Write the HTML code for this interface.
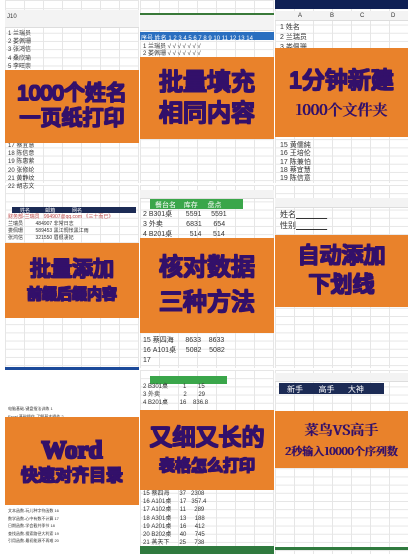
<!DOCTYPE html><html><head><meta charset="utf-8"><style>
*{margin:0;padding:0;box-sizing:border-box}
body{width:413px;height:554px;background:#fff;position:relative;overflow:hidden;font-family:"Liberation Sans","Noto Sans CJK SC",sans-serif}
.c{position:absolute;overflow:hidden;background:#fff;
background-image:linear-gradient(#e6e6e6 1px,transparent 1px),linear-gradient(90deg,#e6e6e6 1px,transparent 1px);background-size:19px 8.2px}
.o{position:absolute;background:#e9822b;text-align:center;font-family:"WenQuanYi Zen Hei",sans-serif;display:flex;flex-direction:column;justify-content:center;align-items:center;line-height:1.15}
.o div{color:#33106a;font-weight:normal;text-shadow:1px 0 0 #33106a,-1px 0 0 #33106a,0 1px 0 #33106a,0 -1px 0 #33106a,1px 1px 0 #33106a,-1px -1px 0 #33106a,1px -1px 0 #33106a,-1px 1px 0 #33106a}
.o div.sf{font-family:"Noto Serif CJK SC",serif;text-shadow:0.5px 0 0 #33106a,-0.5px 0 0 #33106a}
.t{position:absolute;font-size:6px;color:#333;white-space:nowrap}
.hd{position:absolute;background:#f3f3f3;border-bottom:1px solid #ddd}
</style></head><body>
<div class="c" style="left:5px;top:0;width:134px;height:183px"></div>
<div class="c" style="left:140px;top:0;width:134px;height:183px"></div>
<div class="c" style="left:275px;top:0;width:133px;height:183px"></div>
<div class="c" style="left:5px;top:185px;width:134px;height:183px"></div>
<div class="c" style="left:140px;top:185px;width:134px;height:183px"></div>
<div class="c" style="left:275px;top:185px;width:133px;height:183px"></div>
<div class="c" style="left:5px;top:370px;width:134px;height:184px;background-image:none"></div>
<div class="c" style="left:140px;top:370px;width:134px;height:184px"></div>
<div class="c" style="left:275px;top:370px;width:133px;height:184px"></div>

<div class="hd" style="left:5px;top:10px;width:134px;height:18px"></div>
<div class="t" style="left:7px;top:14px">J10</div>
<div class="hd" style="left:140px;top:13px;width:134px;height:18px;border-top:2px solid #3a7a3a"></div>
<div style="position:absolute;left:275px;top:0;width:133px;height:9px;background:#0f2054"></div>
<div class="hd" style="left:275px;top:11px;width:133px;height:10px"></div>
<div class="t" style="left:298px;top:13px">A</div><div class="t" style="left:330px;top:13px">B</div><div class="t" style="left:360px;top:13px">C</div><div class="t" style="left:391px;top:13px">D</div>
<div class="t" style="left:280px;top:22px;font-size:7px">1 姓名<br>2 兰瑞员<br>3 娄佩珊</div>
<div class="t" style="left:280px;top:142px;font-size:7px;line-height:8.3px">15 黄儒純<br>16 王培伦<br>17 陈兼怕<br>18 蔡宜慧<br>19 陈信意</div>
<div class="t" style="left:8px;top:30px;line-height:8.2px">1 兰瑞员<br>2 娄佩珊<br>3 张鸿信<br>4 桑欣瑜<br>5 李旺崇<br>6 陈怡雯</div>
<div class="t" style="left:8px;top:142px;line-height:8.2px">17 蔡宜慧<br>18 陈信意<br>19 陈惠萦<br>20 张修纶<br>21 黄静纹<br>22 胡志文</div>
<div style="position:absolute;left:140px;top:32px;width:134px;height:8px;background:#2a6fc0"></div>
<div class="t" style="left:141px;top:33px;color:#fff">序号 姓名 1 2 3 4 5 6 7 8 9 10 11 12 13 14</div>
<div class="t" style="left:143px;top:41px">1 兰瑞员 √ √ √ √ √ √ √</div>
<div class="t" style="left:143px;top:48px">2 娄佩珊 √ √ √ √ √ √ √</div>

<div style="position:absolute;left:12px;top:207px;width:124px;height:6px;background:#1c2b55"></div>
<div class="t" style="left:20px;top:207px;color:#fff;font-size:5px">姓名 &nbsp;&nbsp;&nbsp;&nbsp;&nbsp;&nbsp;&nbsp;&nbsp;&nbsp; 邮箱 &nbsp;&nbsp;&nbsp;&nbsp;&nbsp;&nbsp;&nbsp;&nbsp;&nbsp;&nbsp; 网名</div>
<div class="t" style="left:8px;top:214px;font-size:5px;line-height:7px"><span style="color:#b44">财务部-兰瑞员 &nbsp; 994907@qq.com 《三十而已》</span><br>兰瑞员 &nbsp;&nbsp;&nbsp;&nbsp;&nbsp;&nbsp;&nbsp; 484907 非常日志<br>娄佩珊 &nbsp;&nbsp;&nbsp;&nbsp;&nbsp;&nbsp;&nbsp; 589453 黑江惆怅黑江雨<br>张鸿信 &nbsp;&nbsp;&nbsp;&nbsp;&nbsp;&nbsp;&nbsp; 321550 眉很凄妃</div>
<div class="hd" style="left:140px;top:190px;width:134px;height:9px"></div>
<div style="position:absolute;left:150px;top:199px;width:93px;height:10px;background:#3aa64a"></div>
<div class="t" style="left:155px;top:200px;color:#fff;font-size:7px">餐台名 &nbsp;&nbsp; 库存 &nbsp;&nbsp;&nbsp; 盘点</div>
<div class="t" style="left:143px;top:210px;font-size:7px;line-height:10px">2 B301桌 &nbsp;&nbsp;&nbsp;&nbsp;&nbsp; 5591 &nbsp;&nbsp;&nbsp; 5591<br>3 外卖 &nbsp;&nbsp;&nbsp;&nbsp;&nbsp;&nbsp;&nbsp;&nbsp;&nbsp;&nbsp; 6831 &nbsp;&nbsp;&nbsp;&nbsp; 654<br>4 B201桌 &nbsp;&nbsp;&nbsp;&nbsp;&nbsp;&nbsp;&nbsp; 514 &nbsp;&nbsp;&nbsp;&nbsp; 514</div>
<div class="t" style="left:143px;top:336px;font-size:7px;line-height:10px">15 蔡四海 &nbsp;&nbsp;&nbsp;&nbsp; 8633 &nbsp;&nbsp; 8633<br>16 A101桌 &nbsp;&nbsp;&nbsp; 5082 &nbsp;&nbsp; 5082<br>17</div>
<div class="hd" style="left:275px;top:198px;width:133px;height:10px"></div>
<div class="t" style="left:280px;top:209px;font-size:8px;line-height:11px">姓名<u>&nbsp;&nbsp;&nbsp;&nbsp;&nbsp;&nbsp;&nbsp;&nbsp;&nbsp;&nbsp;&nbsp;&nbsp;&nbsp;&nbsp;</u><br>性别<u>&nbsp;&nbsp;&nbsp;&nbsp;&nbsp;&nbsp;&nbsp;&nbsp;&nbsp;&nbsp;&nbsp;&nbsp;&nbsp;&nbsp;</u></div>
<div style="position:absolute;left:5px;top:367px;width:134px;height:3px;background:#1c4a9a"></div>

<div class="t" style="left:8px;top:405px;font-size:4px;line-height:8px">电脑基础-键盘指法训练 1<br>Excel 基础操作-了解基本操作 2</div>
<div class="t" style="left:8px;top:507px;font-size:4px;line-height:7.5px">文本函数-玩儿种字符函数 16<br>数学函数-心中有数不计算 17<br>日期函数-学会截共季节 18<br>查找函数-搜索路径大利索 19<br>引用函数-最初能源不再难 20</div>
<div style="position:absolute;left:150px;top:376px;width:77px;height:8px;background:#3aa64a"></div>
<div class="t" style="left:143px;top:383px;font-size:6px;line-height:8.2px">2 B301桌 &nbsp;&nbsp;&nbsp;&nbsp;&nbsp;&nbsp;&nbsp; 1 &nbsp;&nbsp;&nbsp;&nbsp;&nbsp; 15<br>3 外卖 &nbsp;&nbsp;&nbsp;&nbsp;&nbsp;&nbsp;&nbsp;&nbsp;&nbsp;&nbsp;&nbsp;&nbsp; 2 &nbsp;&nbsp;&nbsp;&nbsp;&nbsp; 29<br>4 B201桌 &nbsp;&nbsp;&nbsp;&nbsp;&nbsp; 16 &nbsp;&nbsp; 836.8</div>
<div class="t" style="left:143px;top:490px;font-size:6px;line-height:8.2px">15 蔡四海 &nbsp;&nbsp;&nbsp;&nbsp; 37 &nbsp; 2308<br>16 A101桌 &nbsp;&nbsp;&nbsp; 17 &nbsp; 357.4<br>17 A102桌 &nbsp;&nbsp;&nbsp; 11 &nbsp;&nbsp;&nbsp; 289<br>18 A301桌 &nbsp;&nbsp;&nbsp; 13 &nbsp;&nbsp;&nbsp; 188<br>19 A201桌 &nbsp;&nbsp;&nbsp; 16 &nbsp;&nbsp;&nbsp; 412<br>20 B202桌 &nbsp;&nbsp;&nbsp; 40 &nbsp;&nbsp;&nbsp; 745<br>21 蒸天下 &nbsp;&nbsp;&nbsp;&nbsp; 25 &nbsp;&nbsp;&nbsp; 738</div>
<div style="position:absolute;left:140px;top:546px;width:134px;height:8px;background:#2f7a3e"></div>
<div class="hd" style="left:275px;top:373px;width:133px;height:9px"></div>
<div style="position:absolute;left:279px;top:383px;width:105px;height:11px;background:#1c2b55"></div>
<div class="t" style="left:287px;top:384px;color:#fff;font-size:8px">新手 &nbsp;&nbsp;&nbsp;&nbsp;&nbsp; 高手 &nbsp;&nbsp;&nbsp;&nbsp; 大神</div>
<div style="position:absolute;left:275px;top:547px;width:133px;height:3px;background:#2f7a3e"></div>

<div class="o" style="left:5px;top:70px;width:134px;height:73px;font-size:21px"><div>1000个姓名</div><div>一页纸打印</div></div>
<div class="o" style="left:140px;top:57px;width:134px;height:82px;font-size:24px;line-height:1.3"><div>批量填充</div><div>相同内容</div></div>
<div class="o" style="left:275px;top:48px;width:133px;height:89px"><div style="font-size:23px">1分钟新建</div><div class="sf" style="font-size:15px;margin-top:8px">1000个文件夹</div></div>
<div class="o" style="left:5px;top:243px;width:134px;height:75px"><div style="font-size:21px">批量添加</div><div style="font-size:15px;margin-top:4px">前缀后缀内容</div></div>
<div class="o" style="left:140px;top:238px;width:134px;height:95px;font-size:24px;line-height:1.45"><div>核对数据</div><div>三种方法</div></div>
<div class="o" style="left:275px;top:235px;width:133px;height:72px;font-size:22px;line-height:1.3"><div>自动添加</div><div>下划线</div></div>
<div class="o" style="left:5px;top:417px;width:134px;height:88px"><div style="font-size:25px;font-family:'Liberation Serif',serif;font-weight:bold">Word</div><div style="font-size:17px">快速对齐目录</div></div>
<div class="o" style="left:140px;top:410px;width:134px;height:80px"><div style="font-size:23px">又细又长的</div><div style="font-size:16px;margin-top:8px">表格怎么打印</div></div>
<div class="o" style="left:275px;top:411px;width:133px;height:57px"><div class="sf" style="font-size:14px">菜鸟VS高手</div><div class="sf" style="font-size:11px;margin-top:7px">2秒输入10000个序列数</div></div>
</body></html>
